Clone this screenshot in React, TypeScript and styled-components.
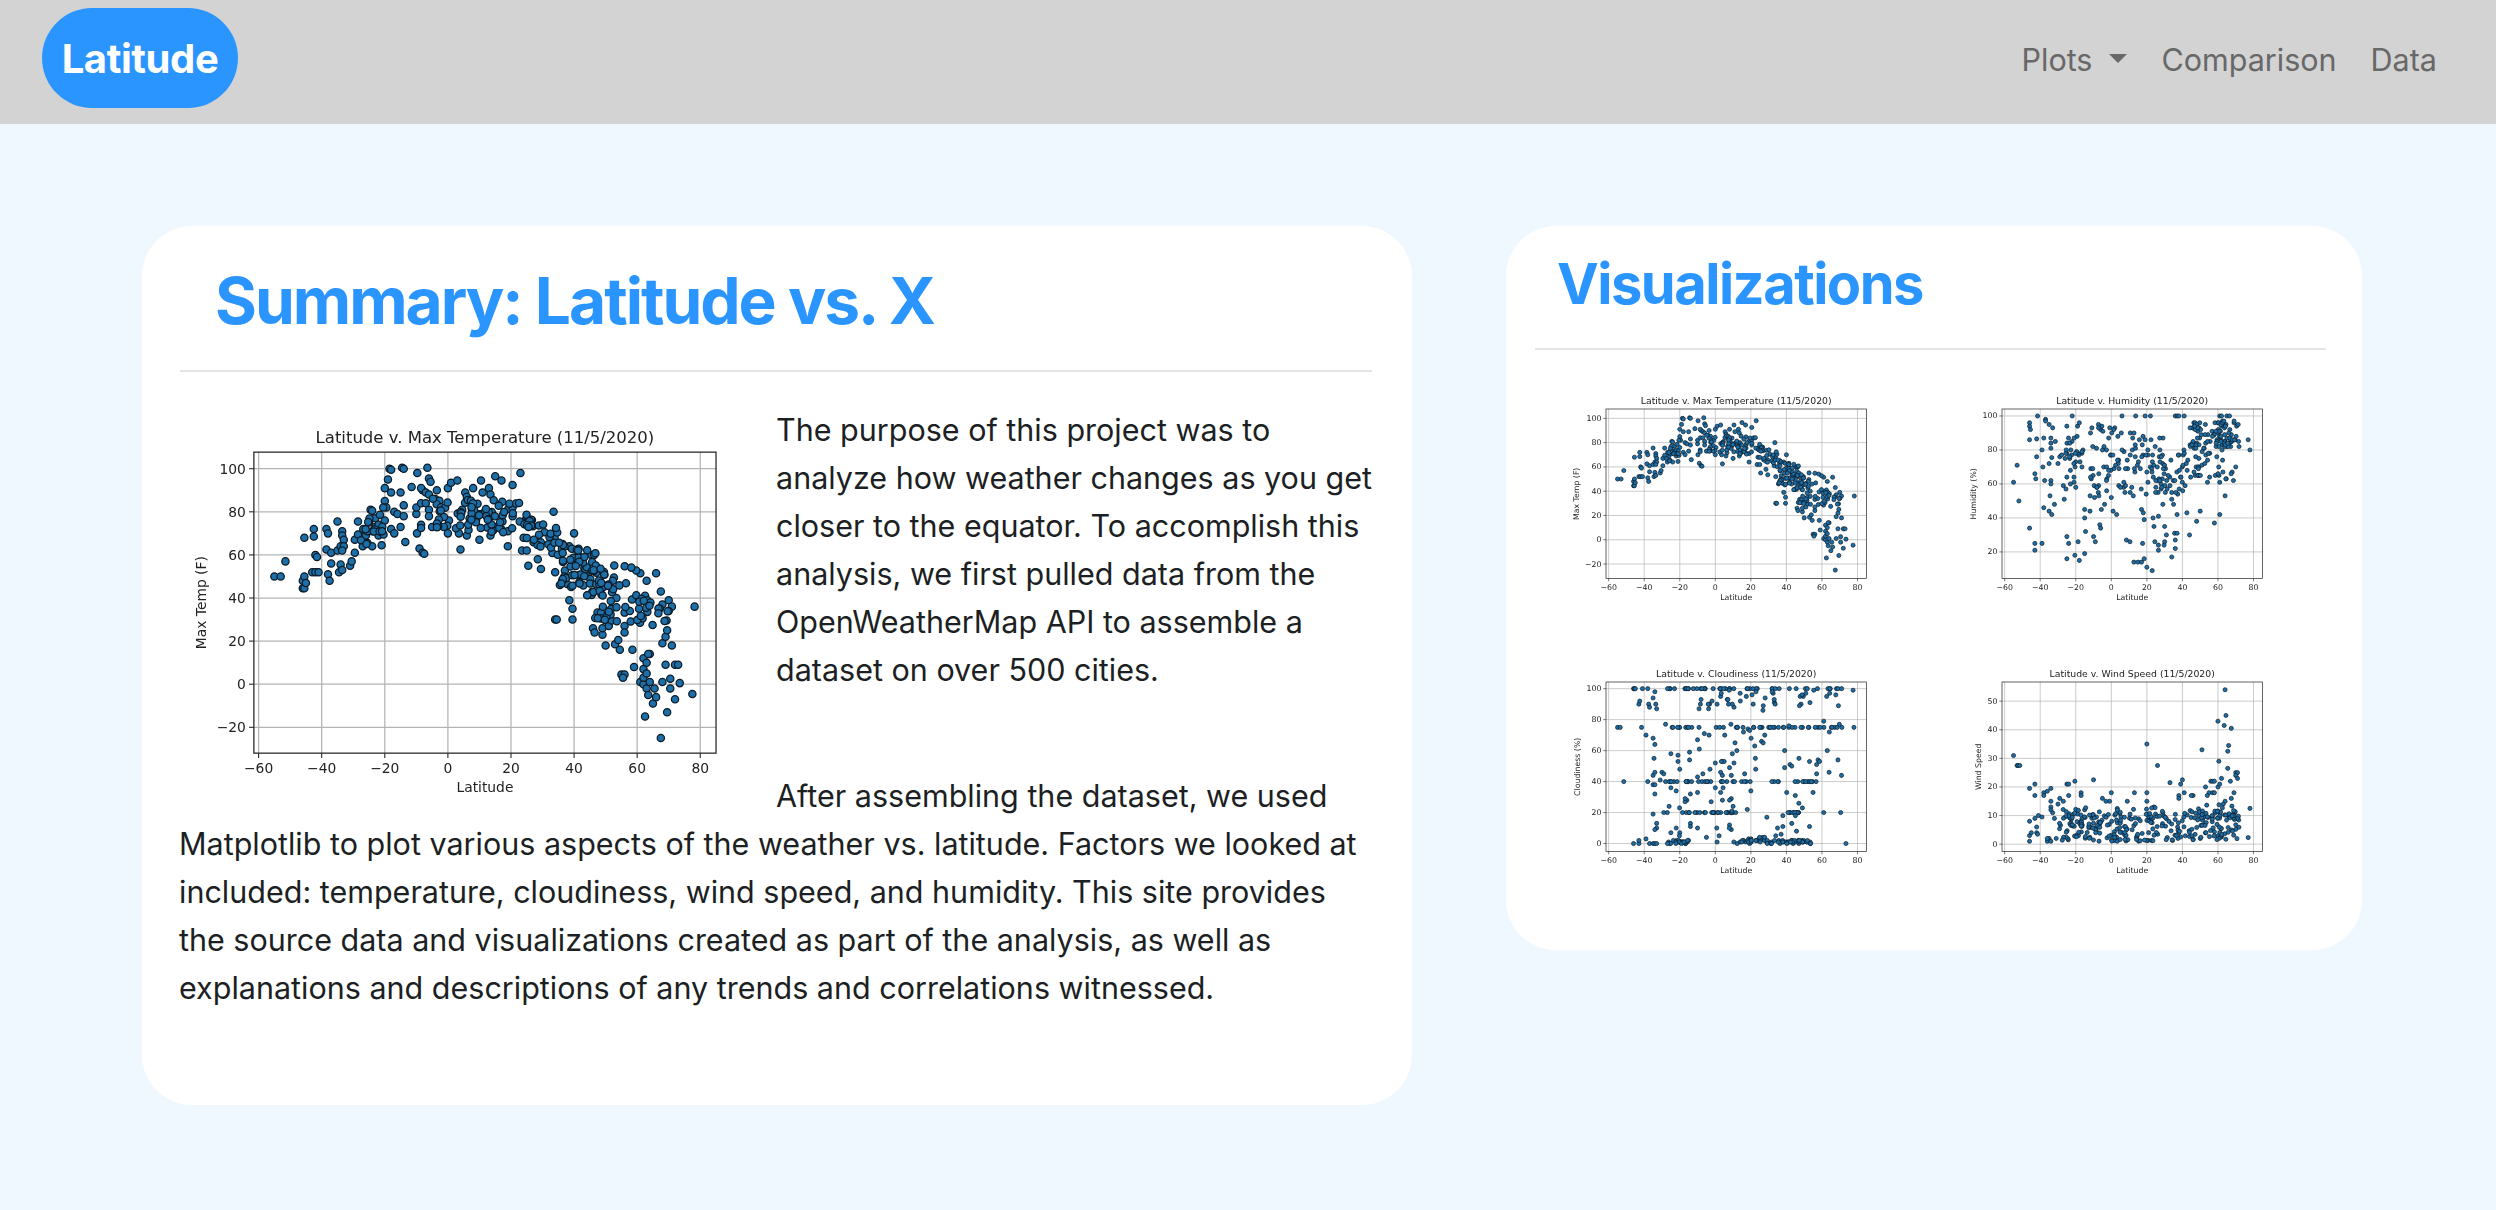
import styled, { createGlobalStyle } from 'styled-components';

type Pt = [number, number];

const GlobalStyle = createGlobalStyle`
  html, body {
    margin: 0;
    padding: 0;
    background: #eff7ff;
  }
  body {
    font-family: Inter, "Liberation Sans", Arial, sans-serif;
    color: #1c1f23;
  }
`;

// the source pictures are scatter plots of ~550 cities: outliers are read off by hand,
// the dense clouds are filled in with a seeded generator
const parse = (s: string): Pt[] =>
  s
    .trim()
    .split(/\s+/)
    .map((p) => p.split(',').map(Number) as Pt);

const cloud = (seed: number, regions: number[][], snap = false): Pt[] => {
  let t = seed;
  const rnd = () => {
    t = (t + 0x6d2b79f5) | 0;
    let r = Math.imul(t ^ (t >>> 15), 1 | t);
    r = (r + Math.imul(r ^ (r >>> 7), 61 | r)) ^ r;
    return ((r ^ (r >>> 14)) >>> 0) / 4294967296;
  };
  const out: Pt[] = [];
  regions.forEach(([n, x0, x1, a0, a1, b0, b1]) => {
    for (let i = 0; i < n; i++) {
      const u = rnd();
      const lo = a0 + (b0 - a0) * u;
      const hi = a1 + (b1 - a1) * u;
      const v = lo + (hi - lo) * rnd();
      out.push([x0 + (x1 - x0) * u, snap ? Math.round(v) : v]);
    }
  });
  return out;
};

const TEMP: Pt[] = [
  ...parse(`-55,50 -53,50 -51.5,57 -46,44.5 -45.5,44.5 -46,48 -45.5,50 -45,47 -45.5,68 -42.5,68.5 -42.5,72 -43,52 -42,52 -41,52
  -42,60 -41.5,59 -38.5,72 -38,70 -38.5,62.5 -37,61 -37,56 -38,51 -37.5,48 -35,75.5 -35,62 -34,64 -33.5,71 -33.5,69 -33,67 -33,64
  -33.5,62 -34,55.5 -34.5,52 -33.5,53 -31,55 -30.5,57 -29.5,61 -29.5,67 -28.5,69.5 -28.5,75.5 -27,64 -26,69 -25.5,65.5 -25,75
  -24.5,81 -24,80.5 -24,64 -24,71 -23,73 -23,77 -22,69 -22,74 -21,64.5 -21,71 -20,76 -20,85 -20,91 -19,95 -18.5,100 -18,99.5 -18,89
  -19.5,82 -20.5,82 -18,72 -17,70 -17,80 -16,79 -15,73 -15,89 -14.5,100.5 -14,100 -14,83 -14,78 -13.5,66 -11.5,91.5 -10,79 -10,82
  -9.7,98 -9.8,70 -9,63 -8.5,74 -8.5,72.5 -8,61 -8,90 -8.5,91 -8.5,84 -7.5,60.5 -7,89 -7,84 -6.5,100.5 -6,95.5 -5.5,94 -6,88 -6,81
  -6,78 -5,73 -4,86 -3.5,90 -3,74 0,91 1,93.5 3,94.5 0,70 3.5,70 4,62.5 6,69 5.5,89 6,87 8,91 10,67 10.5,94.5 11,89 13,91 13.5,88
  13.5,69 15,96.5 17,94.5 19,64 20.5,92.5 23,98 19,71 24,68 23.5,62 25.5,55 25,62 28.5,58 29.5,53.5 33.5,80 34,52 34,30 34.5,30
  39.5,30 38.5,39 39.5,35 40,70 35.5,46 37,48 45.5,60 46,26 46.5,24 49,23 49,26 50,18 51,27 53,18.5 54,20.5 54.5,16 56,27 56,24
  58.5,16 59,8 55,4.5 56,4.5 55.5,3 61,1 62,0 62,3 62,7 62,12 63,10 63,5 64,14 63.5,14 63,-2 63.5,-5 64,1 65,-9 65.5,-2 66,-6
  62.5,-15 69.5,-13 67.5,-25 72,-7 77.5,-4.5 78.2,36 69,9 72,9 73,9 71,18 68,19 69,22 69.5,25 70,39 67.5,43 66,51.5 63,48 61,51.5
  62.5,41 68,1 70.5,2.5 70.5,-2 73.5,.5 71,36 70,34 68,37`),
  ...cloud(11, [
    [85, -5, 25, 72, 88, 70, 84],
    [28, 25, 35, 66, 80, 58, 72],
    [62, 35, 50, 46, 67, 38, 60],
    [50, 46, 62, 30, 56, 28, 56],
    [18, 60, 70, 28, 40, 26, 38],
    [14, -28, -20, 63, 76, 68, 80],
  ]),
];

const HUMIDITY: Pt[] = [
  ...parse(`-55,61 -53,71 -52,50 -46,34 -43,25 -43,21 -39,25 -38,46 -35,44 -33.5,42 -32,48 -34.5,53 -26.5,51 -25,29 -25,16 -24,25
  -20.5,18 -18.7,26 -18,15 -15,19 -14.5,32 -15,40 -15,45 -12,44 -10,29 -9,26 -6.5,36 -6,34 -5.6,45 -3.8,48 0,52 1,44 3,42 8.5,27
  10.5,26 12.7,14 15,14 17,14 18.5,16 20,11 23,9 17.6,25 17,45 18,43 18.5,39 23.5,40 24,35 24.5,26 26.5,24 26.5,21 26.5,41 29.7,24
  30,35 30,26 31,30 34,17 36,22 36,27 35.6,31 37,31 37,42 44,30 42.5,43 48,38 50,44 58,37 61,42 64,53 -41.5,100 -22,100 6,100 13.7,100
  19,100 22,100 36,100 37,100 38,100 41,100 61,100 62,100 65,100 66.5,100 -46,96 -46,94 -45.5,92 -46,86 -42,86.5 -42,76 -43,66
  -42.5,63 -37,98 -37,97 -35,95 -33,93 -38,87 -39,80 -38.5,70 -37.5,62 -31.5,85 77,86 78,80 -34,87 -34,84 -34,81 -33.5,75.5 -35,72
  -34,62 -34,60 -30,72 -29,76 -28,77 -27,59 -26,75 -25.5,57 -25,64 -25,78 -25,94 -23,68 -23,60 -21,64 -21,61 -20,58 -19,94 -18,96
  28,60 28,57 29,48 33,59 34,55 34,51 35,48 68,67 70,70`),
  ...cloud(23, [
    [95, 44, 72, 80, 96, 82, 98],
    [42, 30, 50, 50, 78, 60, 88],
    [26, 48, 70, 60, 80, 60, 80],
    [120, -12, 30, 50, 96, 55, 88],
    [24, -26, -15, 70, 88, 70, 88],
  ], true),
];

const CLOUD: Pt[] = [
  ...parse(`-55,75 -53.5,75 -51.5,40 -46,100 -45.5,100 -45,100 -41,100 -38,100 -46,0 -43,0 -43,2 -43,90 -42.5,92 -41.5,75 -39,70 -39,3
  -38,40 -37.5,90 -37,88 -35,94 -34,98 -33.5,90 -33,87 -35,68 -34,64 -34.5,55 -35,44 -34,46 -35,38 -34,38 -34,32 -35,19 -33,13 -33,10
  -34,9 -31,41 -30,46 -29,45 -28,40 -28,77 -29,20 -27,20 -37,0 -35,0 -34,0 -33,0 77.5,99 78,75 73.5,0 71,44 70.5,20 69,54 64,46
  63,60 61,20 61,79 -14.5,59 -14.5,54 -25,58 -21,57 -21,53 -20,48 -22,34 -25,36 -26,24 -25,7 -22,10 -20,7 -14,32 -14,13 -14,11 -16,28
  -17,27 -10,43 -10,33 -10,10 -9,61 -10,67 -5,4 1,1 0,52 4,53 5,53 -3,48 3,46 4,44 8,49 9,44 10.5,52 9,29 8,28 8,12 9,9 4,28 3,33
  0,36 20,34 18,22 26,66 29,17 34,5 35,10 37,6 38,18 39,49 42,51 43,50 45,31 47,26 49,23 43,13 53,53 53,11 55,33 57,51 57,45`),
  ...cloud(37, [
    [46, -28, 72, 100, 100, 100, 100],
    [42, -10, 70, 86, 99, 86, 99],
    [44, -25, 72, 75, 75, 75, 75],
    [26, -26, 20, 40, 40, 40, 40],
    [14, 28, 58, 40, 40, 40, 40],
    [24, -22, 12, 20, 20, 20, 20],
    [10, 40, 47, 20, 20, 20, 20],
    [26, -27, -15, 0, 2, 0, 2],
    [26, 10, 30, 0, 1, 0, 5],
    [42, 29, 54, 0, 2, 0, 2],
    [18, -8, 70, 60, 80, 60, 80],
    [14, -25, 60, 4, 36, 4, 36],
    [10, -20, 60, 44, 60, 44, 60],
  ], true),
];

const WIND: Pt[] = [
  ...parse(`-55,31 -53,27.5 -52.5,27.5 -51.5,27.5 -46,19.5 -43,21 -43,17 20,35 26,27.5 51,33 64,54 64.5,45 60,43 63.5,41.5 67.5,40.5
  66,34.5 65.5,32.5 60.5,29 65.5,26.5 -10,22.5 -20.5,22 33,21.5 40,22.5 39,21 78,12.5 77,2.3 -46,1 -46,3 -45,4 -46,8 -42,4 -41.5,3.5
  -42,6 -41,10 -43,9 -39,9.5 -38,18 -38,17 -36,18.5 -34,19.5 -34,15 -34,13 -34,12 -33,11 -32,9 -31,2 -36,1 -35,2 -34,1 -36,2 -30,14
  -29,16 -27,15 -25,21 -24,21 -24,17 -15,12 -17,18 -17,17 0,18 -1,15 -3,15 -5,16 9,15 13,18 20,18 20,15 24,13 29,11 70,25 71,25
  70,24 71,23 67,22 69,18 67.5,16 64,15 63,14 56,22 57,22 58,22 53,20 55,18 54,17 57,18 58,18 60,20 61,21 62,23 41,18 46,17 45,17
  38,17 38,16`),
  ...cloud(53, [
    [250, -30, 72, 1, 11, 1, 11],
    [32, 40, 70, 9, 14, 9, 14],
    [26, -30, 30, 9, 13, 9, 13],
  ]),
];

const Chart = ({
  title,
  yLabel,
  yLabelX,
  yTicks,
  yLim,
  points,
  large,
}: {
  title: string;
  yLabel: string;
  yLabelX: number;
  yTicks: number[];
  yLim: [number, number];
  points: Pt[];
  large?: boolean;
}) => {
  const left = 66;
  const top = 39;
  const w = 260.4;
  const h = 169.6;
  const sx = (v: number) => left + ((v + 61.5) / 146.5) * w;
  const sy = (v: number) => top + ((yLim[1] - v) / (yLim[1] - yLim[0])) * h;
  const xTicks = [-60, -40, -20, 0, 20, 40, 60, 80];

  return (
    <ChartSvg $large={large} viewBox={large ? '24 13 336 222' : '0 0 396 273'} role="img" aria-label={title}>
      <rect x={left} y={top} width={w} height={h} fill="#fff" />
      {xTicks.map((t) => (
        <g key={`x-${t}`}>
          <GridLine x1={sx(t)} x2={sx(t)} y1={top} y2={top + h} />
          <TickLine x1={sx(t)} x2={sx(t)} y1={top + h} y2={top + h + 2.7} />
          <TickLabel x={sx(t)} y={top + h + 8.4} textAnchor="middle">
            {t < 0 ? `\u2212${-t}` : t}
          </TickLabel>
        </g>
      ))}
      {yTicks.map((t) => (
        <g key={`y-${t}`}>
          <GridLine x1={left} x2={left + w} y1={sy(t)} y2={sy(t)} />
          <TickLine x1={left - 2.7} x2={left} y1={sy(t)} y2={sy(t)} />
          <TickLabel x={left - 4.5} y={sy(t)} textAnchor="end">
            {t < 0 ? `\u2212${-t}` : t}
          </TickLabel>
        </g>
      ))}
      {points.map(([x, y], i) => (
        <Dot key={i} cx={sx(x)} cy={sy(y)} r={2.05} />
      ))}
      <AxesFrame x={left} y={top} width={w} height={h} />
      <ChartTitle x={left + w / 2} y={top - 8.4} textAnchor="middle">
        {title}
      </ChartTitle>
      <TickLabel x={left + w / 2} y={top + h + 19} textAnchor="middle">
        Latitude
      </TickLabel>
      <TickLabel
        x={0}
        y={0}
        textAnchor="middle"
        transform={`translate(${left + yLabelX} ${top + h / 2}) rotate(-90)`}
      >
        {yLabel}
      </TickLabel>
    </ChartSvg>
  );
};

export default function App() {
  return (
    <Page>
      <GlobalStyle />
      <Navbar>
        <Brand>Latitude</Brand>
        <NavLinks>
          <NavLink>
            Plots
            <Caret />
          </NavLink>
          <NavLink>Comparison</NavLink>
          <NavLink>Data</NavLink>
        </NavLinks>
      </Navbar>
      <Main>
        <SummaryCard>
          <SummaryTitle>Summary: Latitude vs. X</SummaryTitle>
          <Rule />
          <Body>
            <Chart
              large
              title="Latitude v. Max Temperature (11/5/2020)"
              yLabel="Max Temp (F)"
              yLabelX={-30}
              yTicks={[-20, 0, 20, 40, 60, 80, 100]}
              yLim={[-32, 107.7]}
              points={TEMP}
            />
            <Paragraph $gap={78}>
              The purpose of this project was to analyze how weather changes as you get closer to the equator. To
              accomplish this analysis, we first pulled data from the OpenWeatherMap API to assemble a dataset on over
              500 cities.
            </Paragraph>
            <Paragraph $gap={0}>
              After assembling the dataset, we used Matplotlib to plot various aspects of the weather vs. latitude.
              Factors we looked at included: temperature, cloudiness, wind speed, and humidity. This site provides the
              source data and visualizations created as part of the analysis, as well as explanations and descriptions
              of any trends and correlations witnessed.
            </Paragraph>
          </Body>
        </SummaryCard>
        <VisualCard>
          <VisualTitle>Visualizations</VisualTitle>
          <Rule />
          <ChartGrid>
            <Chart
              title="Latitude v. Max Temperature (11/5/2020)"
              yLabel="Max Temp (F)"
              yLabelX={-30}
              yTicks={[-20, 0, 20, 40, 60, 80, 100]}
              yLim={[-32, 107.7]}
              points={TEMP}
            />
            <Chart
              title="Latitude v. Humidity (11/5/2020)"
              yLabel="Humidity (%)"
              yLabelX={-29}
              yTicks={[20, 40, 60, 80, 100]}
              yLim={[4.3, 104.1]}
              points={HUMIDITY}
            />
            <Chart
              title="Latitude v. Cloudiness (11/5/2020)"
              yLabel="Cloudiness (%)"
              yLabelX={-29}
              yTicks={[0, 20, 40, 60, 80, 100]}
              yLim={[-5.2, 104.3]}
              points={CLOUD}
            />
            <Chart
              title="Latitude v. Wind Speed (11/5/2020)"
              yLabel="Wind Speed"
              yLabelX={-24}
              yTicks={[0, 10, 20, 30, 40, 50]}
              yLim={[-2.6, 56.7]}
              points={WIND}
            />
          </ChartGrid>
        </VisualCard>
      </Main>
    </Page>
  );
}

const Page = styled.div`
  min-height: 1210px;
  background: #eff7ff;
`;

const Navbar = styled.nav`
  height: 124px;
  box-sizing: border-box;
  padding: 8px 42px 16px 42px;
  background: #d3d3d3;
  display: flex;
  align-items: center;
  justify-content: space-between;
`;

const Brand = styled.a`
  width: 196px;
  height: 100px;
  border-radius: 50px;
  background: #2b95ff;
  color: #fff;
  font-size: 40px;
  font-weight: 700;
  letter-spacing: -0.4px;
  display: flex;
  align-items: center;
  justify-content: center;
`;

const NavLinks = styled.div`
  display: flex;
  align-items: center;
  margin-top: 4px;
`;

const NavLink = styled.a`
  padding: 0 17px;
  font-size: 30.5px;
  line-height: 48px;
  color: #686868;
  display: flex;
  align-items: center;
`;

const Caret = styled.span`
  width: 0;
  height: 0;
  margin-left: 17px;
  margin-top: -3px;
  border-top: 9px solid #686868;
  border-left: 9px solid transparent;
  border-right: 9px solid transparent;
`;

const Main = styled.main`
  display: flex;
  align-items: flex-start;
  gap: 94px;
  padding: 102px 134px 0 142px;
`;

const SummaryCard = styled.section`
  width: 1270px;
  box-sizing: border-box;
  padding: 37px 40px 93px 38px;
  background: #fff;
  border-radius: 50px;
`;

const VisualCard = styled.section`
  width: 856px;
  box-sizing: border-box;
  padding: 25px 36px 34px 29px;
  background: #fff;
  border-radius: 50px;
`;

const SummaryTitle = styled.h1`
  margin: 0 0 31px 35px;
  font-size: 64px;
  line-height: 76px;
  letter-spacing: -2px;
  font-weight: 700;
  color: #2b95ff;
`;

const VisualTitle = styled.h2`
  margin: 0 0 31px 22px;
  font-size: 56px;
  line-height: 66px;
  letter-spacing: -1.5px;
  font-weight: 700;
  color: #2b95ff;
`;

const Rule = styled.hr`
  margin: 0;
  border: 0;
  border-top: 2px solid #e4e4e4;
`;

const Body = styled.div`
  margin: 0 -4px 0 -1px;
  padding-top: 34px;
  font-size: 30.5px;
  line-height: 48px;
`;

const Paragraph = styled.p<{ $gap: number }>`
  margin: 0 0 ${(p) => p.$gap}px;
`;

const ChartGrid = styled.div`
  display: grid;
  grid-template-columns: repeat(2, 396px);
  grid-auto-rows: 273px;
  margin-top: 20px;
  margin-left: 5px;
`;

const ChartSvg = styled.svg<{ $large?: boolean }>`
  display: block;
  width: ${(p) => (p.$large ? '597px' : '396px')};
  height: ${(p) => (p.$large ? '394px' : '273px')};
  float: ${(p) => (p.$large ? 'left' : 'none')};
  filter: blur(${(p) => (p.$large ? '0.6px' : '0.7px')});
`;

const GridLine = styled.line`
  stroke: #b4b4b4;
  stroke-width: 0.7;
`;

const TickLine = styled.line`
  stroke: #222;
  stroke-width: 0.6;
`;

const AxesFrame = styled.rect`
  fill: none;
  stroke: #222;
  stroke-width: 0.7;
`;

const Dot = styled.circle`
  fill: #1c6fa9;
  stroke: #0c1a24;
  stroke-width: 0.7;
`;

const TickLabel = styled.text`
  font-family: "DejaVu Sans", sans-serif;
  font-size: 7.8px;
  fill: #222;
  dominant-baseline: central;
`;

const ChartTitle = styled.text`
  font-family: "DejaVu Sans", sans-serif;
  font-size: 9.3px;
  fill: #222;
  dominant-baseline: central;
`;
